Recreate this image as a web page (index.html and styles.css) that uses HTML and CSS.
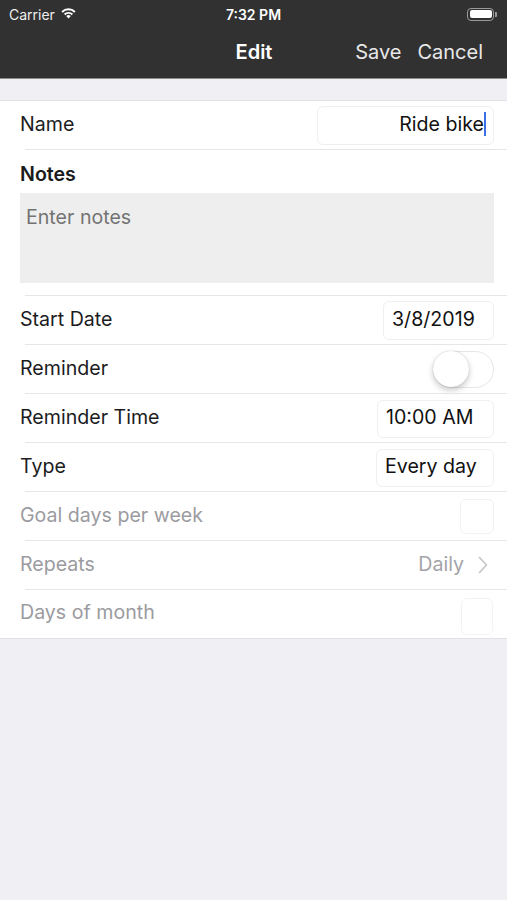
FILE: index.html
```html
<!DOCTYPE html>
<html>
<head>
<meta charset="utf-8">
<link rel="stylesheet" href="styles.css">
</head>
<body>
<header class="topbar">
  <div class="status">
    <div class="status-left">
      <span>Carrier</span>
      <svg class="wifi" width="17" height="12" viewBox="0 0 17 12">
        <path d="M8.5 11.5 L6.2 9.1 A3.3 3.3 0 0 1 10.8 9.1 Z" fill="#fff"/>
        <path d="M3.9 6.8 A6.5 6.5 0 0 1 13.1 6.8 L11.7 8.2 A4.5 4.5 0 0 0 5.3 8.2 Z" fill="#fff"/>
        <path d="M1.4 4.3 A10 10 0 0 1 15.6 4.3 L14.2 5.7 A8 8 0 0 0 2.8 5.7 Z" fill="#fff"/>
      </svg>
    </div>
    <div class="status-time">7:32 PM</div>
    <div class="status-right">
      <div class="battery"><div class="battery-fill"></div></div>
      <div class="battery-cap"></div>
    </div>
  </div>
  <nav class="navbar">
    <div class="nav-title">Edit</div>
    <div class="nav-actions">
      <span>Save</span>
      <span>Cancel</span>
    </div>
  </nav>
</header>

<main class="table">
  <div class="row">
    <span class="label">Name</span>
    <div class="field field-name"><span>Ride bike</span><span class="caret"></span></div>
  </div>
  <div class="notes">
    <div class="notes-label">Notes</div>
    <div class="notes-box">Enter notes</div>
  </div>
  <div class="row">
    <span class="label">Start Date</span>
    <div class="field field-date">3/8/2019</div>
  </div>
  <div class="row">
    <span class="label">Reminder</span>
    <div class="switch"><div class="knob"></div></div>
  </div>
  <div class="row">
    <span class="label">Reminder Time</span>
    <div class="field field-time">10:00 AM</div>
  </div>
  <div class="row">
    <span class="label">Type</span>
    <div class="field field-type">Every day</div>
  </div>
  <div class="row disabled">
    <span class="label">Goal days per week</span>
    <div class="field field-empty"></div>
  </div>
  <div class="row disabled">
    <span class="label">Repeats</span>
    <div class="detail">
      <span>Daily</span>
      <svg class="chevron" width="10" height="18" viewBox="0 0 10 18">
        <path d="M1.5 1.5 L8.5 9 L1.5 16.5" fill="none" stroke="#c4c4c8" stroke-width="1.6" stroke-linecap="round" stroke-linejoin="round"/>
      </svg>
    </div>
  </div>
  <div class="row disabled last">
    <span class="label">Days of month</span>
    <div class="field field-empty field-empty2"></div>
  </div>
</main>
</body>
</html>
```

FILE: styles.css
```css
* { box-sizing: border-box; }
html, body { margin: 0; padding: 0; }
body {
  background: #efeff4;
  font-family: Inter, "Noto Sans", "Liberation Sans", sans-serif;
  color: #1a1a1a;
  width: 507px;
  min-height: 900px;
}
.topbar {
  background: #313131;
  height: 79px;
  color: #fff;
  border-bottom: 1px solid #8a8a8a;
}
.status {
  height: 28px;
  display: grid;
  grid-template-columns: 1fr auto 1fr;
  align-items: center;
  padding: 0 9px;
  font-size: 14px;
}
.status-left { display: flex; align-items: center; gap: 5px; color: #eee; }
.wifi { margin-top: -2px; }
.status-time { font-weight: 600; }
.status-right { display: flex; justify-content: flex-end; align-items: center; padding-right: 1px; }
.battery {
  width: 27px; height: 13px;
  border: 1.5px solid #9a9a9a;
  border-radius: 4px;
  padding: 1.5px;
}
.battery-fill { width: 100%; height: 100%; background: #fff; border-radius: 2px; }
.battery-cap { width: 2px; height: 5px; background: #9a9a9a; border-radius: 0 1px 1px 0; margin-left: 1px; }
.navbar {
  height: 50px;
  position: relative;
  display: flex;
  align-items: center;
  justify-content: flex-end;
  padding-right: 24px;
  font-size: 20px;
}
.nav-title {
  position: absolute;
  left: 0; right: 0;
  text-align: center;
  font-weight: 600;
  top: 12px;
  padding-left: 1px;
}
.nav-actions { display: flex; gap: 16px; color: #e8e8e8; margin-top: -2px; position: relative; }

.table {
  margin-top: 21px;
  background: #fff;
  border-top: 1px solid #e2e2e6;
  border-bottom: 1px solid #e2e2e6;
}
.row {
  height: 49px;
  display: flex;
  align-items: center;
  justify-content: space-between;
  padding: 0 13px 0 20px;
  font-size: 19.6px;
  position: relative;
}
.row::after, .notes::after {
  content: "";
  position: absolute;
  left: 25px; right: 0; bottom: 0;
  height: 1px;
  background: #e6e6ea;
}
.row.last { height: 48px; }
.row.last::after { display: none; }
.label { color: #1c1c1e; margin-bottom: 4px; }
.disabled .label { color: #9b9b9f; }
.field {
  height: 39px;
  border: 1px solid #efeff1;
  border-radius: 6px;
  display: flex;
  align-items: center;
  justify-content: flex-start;
  padding: 0 8px 3px;
  color: #111;
  font-size: 19.6px;
}
.field-name { width: 177px; padding-right: 7px; justify-content: flex-end; }
.caret { width: 2px; height: 24px; background: #3b6ee8; margin-left: 0; }
.field-date { width: 111px; }
.field-time { width: 117px; height: 38px; }
.field-type { width: 118px; height: 38px; }
.field-empty { width: 34px; height: 35px; border-color: #f2f2f4; }
.field-empty2 { width: 32px; height: 37px; margin-right: 1px; margin-top: 4px; }
.notes {
  position: relative;
  padding: 12px 13px 13px 20px;
}
.notes-label { font-size: 19.6px; font-weight: 600; height: 24px; line-height: 24px; }
.notes-box {
  margin-top: 7px;
  height: 90px;
  background: #eeeeee;
  padding: 12px 6px;
  font-size: 19.6px;
  color: #737373;
}
.switch {
  width: 61px; height: 37px;
  border-radius: 19px;
  border: 1.5px solid #e6e6e8;
  background: #fff;
  position: relative;
}
.knob {
  position: absolute;
  left: -1px; top: -1px;
  width: 36px; height: 36px;
  border-radius: 50%;
  background: #fff;
  box-shadow: 0 3px 6px rgba(0,0,0,0.22), 0 0 1px rgba(0,0,0,0.25);
}
.detail { display: flex; align-items: center; gap: 14px; color: #a4a4a8; padding-right: 6px; margin-bottom: 3px; }
.chevron { margin-top: 1px; }
```
